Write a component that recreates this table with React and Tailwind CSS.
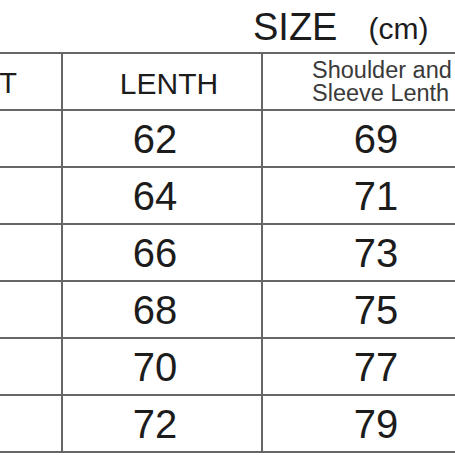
export default function App() {
  const rows = [
    ["62", "69"],
    ["64", "71"],
    ["66", "73"],
    ["68", "75"],
    ["70", "77"],
    ["72", "79"],
  ];
  return (
    <div
      className="w-[455px] h-[455px] overflow-hidden bg-white text-[#1c1c1c]"
      style={{ fontFamily: '"Liberation Sans", Arial, sans-serif' }}
    >
      {/* title */}
      <div className="h-[52px] flex items-end pl-[253px] pb-[6px] whitespace-nowrap">
        <span className="text-[38px] leading-none">SIZE</span>
        <span className="text-[30px] leading-none ml-[31px] mb-[2px]">(cm)</span>
      </div>

      {/* table */}
      <div className="w-[600px] border-b-2 border-[#666]">
        <div className="flex h-[57px] border-t-2 border-[#666]">
          <div className="w-[61px] shrink-0 flex items-center justify-end pr-[44px] overflow-hidden whitespace-nowrap text-[29px] leading-none">
            <span className="mt-[4px]">BUST</span>
          </div>
          <div className="w-[200px] shrink-0 border-l-2 border-[#666] flex items-center justify-center text-[30px] leading-none">
            <span className="ml-[14px] mt-[4px]">LENTH</span>
          </div>
          <div className="w-[228px] shrink-0 border-l-2 border-[#666] flex flex-col justify-center pl-[49px] text-[23.5px] leading-[23px] whitespace-nowrap text-[#3a3a3a]">
            <span>Shoulder and</span>
            <span>Sleeve Lenth</span>
          </div>
        </div>
        {rows.map(([len, sleeve]) => (
          <div key={len} className="flex h-[57px] border-t-2 border-[#666]">
            <div className="w-[61px] shrink-0" />
            <div className="w-[200px] shrink-0 border-l-2 border-[#666] flex items-center justify-center text-[40px] leading-none">
              <span className="mr-[14px]">{len}</span>
            </div>
            <div className="w-[228px] shrink-0 border-l-2 border-[#666] flex items-center justify-center text-[40px] leading-none">
              {sleeve}
            </div>
          </div>
        ))}
      </div>
    </div>
  );
}
